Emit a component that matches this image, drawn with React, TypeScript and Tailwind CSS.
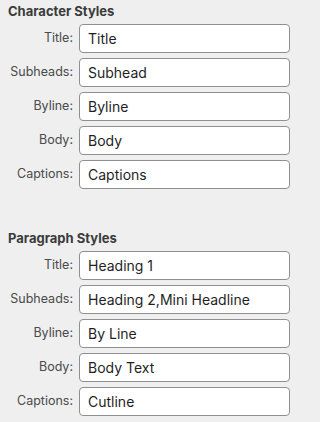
import React from "react";

const sections = [
  {
    title: "Character Styles",
    rows: [
      ["Title:", "Title"],
      ["Subheads:", "Subhead"],
      ["Byline:", "Byline"],
      ["Body:", "Body"],
      ["Captions:", "Captions"],
    ],
  },
  {
    title: "Paragraph Styles",
    rows: [
      ["Title:", "Heading 1"],
      ["Subheads:", "Heading 2,Mini Headline"],
      ["Byline:", "By Line"],
      ["Body:", "Body Text"],
      ["Captions:", "Cutline"],
    ],
  },
];

export default function App() {
  return (
    <div
      className="w-[320px] h-[422px] bg-[#efefef] pt-[3px] flex flex-col gap-[41px]"
      style={{ fontFamily: "Inter, 'Liberation Sans', sans-serif" }}
    >
      {sections.map((s) => (
        <div key={s.title} className="flex flex-col">
          <div className="h-[16px] leading-[16px] pl-[8px] text-[13px] font-bold text-[#3b3b3b] mb-[5px]">
            {s.title}
          </div>
          <div className="flex flex-col gap-[5px]">
            {s.rows.map(([label, value]) => (
              <div key={label} className="flex items-center">
                <div className="w-[73px] text-right text-[12.5px] text-[#4a4a4a]">
                  {label}
                </div>
                <div className="ml-[6px] w-[211px] h-[29px] bg-white border border-[#8f8f8f] rounded-[4px] pl-[8px] flex items-center text-[14px] text-[#1f1f1f]">
                  {value}
                </div>
              </div>
            ))}
          </div>
        </div>
      ))}
    </div>
  );
}
